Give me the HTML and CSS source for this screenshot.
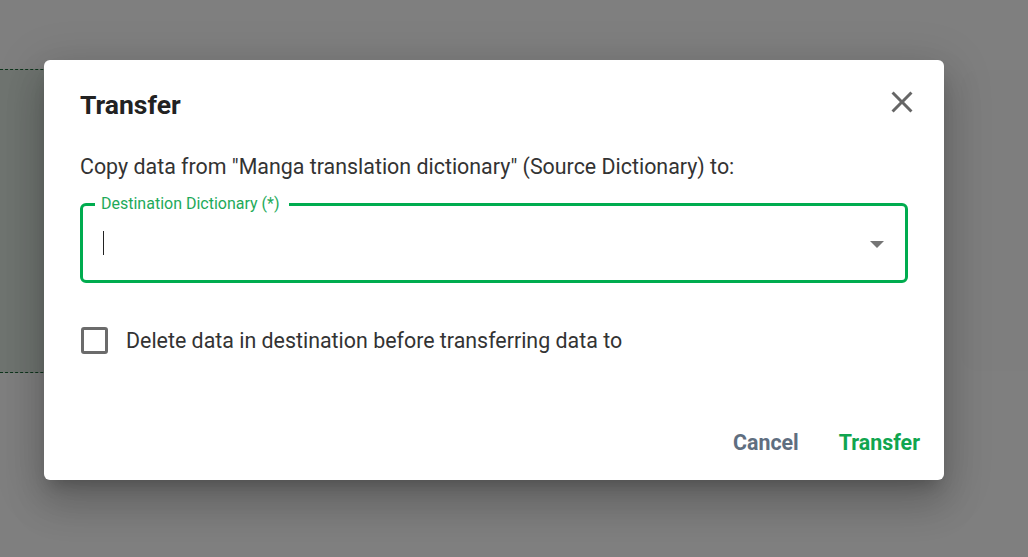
FILE: index.html
```html
<!DOCTYPE html>
<html>
<head>
<meta charset="utf-8">
<link rel="stylesheet" href="styles.css">
</head>
<body>
<div class="page">
  <div class="bg-card left"></div>
  <div class="bg-card right"></div>
</div>
<div class="overlay">
  <div class="dialog">
    <div class="head">
      <h2 class="title">Transfer</h2>
      <button class="close" aria-label="Close">
        <svg viewBox="0 0 24 24"><path d="M19 6.41 17.59 5 12 10.59 6.41 5 5 6.41 10.59 12 5 17.59 6.41 19 12 13.41 17.59 19 19 17.59 13.41 12z" fill="#666"/></svg>
      </button>
    </div>
    <p class="desc">Copy data from "Manga translation dictionary" (Source Dictionary) to:</p>
    <div class="field">
      <span class="legend">Destination Dictionary (*)</span>
      <span class="caret"></span>
      <span class="arrow"></span>
    </div>
    <label class="check">
      <span class="box"></span>
      <span class="check-text">Delete data in destination before transferring data to</span>
    </label>
    <div class="actions">
      <button class="btn cancel">Cancel</button>
      <button class="btn primary">Transfer</button>
    </div>
  </div>
</div>
</body>
</html>
```
FILE: styles.css
```css
html, body { margin: 0; padding: 0; }
body {
  width: 1028px; height: 557px; overflow: hidden;
  font-family: Roboto, "Liberation Sans", sans-serif;
  background: #fff;
  position: relative;
}
.page { height: 557px; display: flex; justify-content: space-between; align-items: flex-start; padding-top: 69px; box-sizing: border-box; }
.bg-card.left {
  width: 300px; height: 304px;
  background: #dfe9e1;
  border-top: 1px dashed #1f6b3a; border-bottom: 1px dashed #1f6b3a;
  box-sizing: border-box;
}
.bg-card.right {
  width: 67px; height: 301px; margin-top: 1px;
  background: #fdfdfd; border-radius: 16px 0 0 16px;
}
.overlay {
  position: absolute; inset: 0;
  background: rgba(0,0,0,0.5);
  padding: 60px 0 0 44px;
  box-sizing: border-box;
}
.dialog {
  width: 900px; height: 420px; box-sizing: border-box;
  background: #fff; border-radius: 6px;
  box-shadow: 0 11px 15px -7px rgba(0,0,0,.2), 0 24px 38px 3px rgba(0,0,0,.14), 0 9px 46px 8px rgba(0,0,0,.12);
  padding: 0 24px 0 36px;
  display: flex; flex-direction: column;
}
.head { display: flex; justify-content: space-between; align-items: center; height: 88px; }
.title { margin: 0; font-size: 26.5px; font-weight: 700; color: #222; }
.close { border: 0; background: none; padding: 0; width: 36px; height: 36px; display: flex; align-items: center; justify-content: center; margin-right: 0; margin-top: -4px; }
.close svg { width: 36px; height: 36px; display: block; }
.desc { margin: 0; font-size: 21.4px; color: #333; line-height: 28px; height: 38px; padding-top: 5px; }
.field {
  margin: 12px 12px 0 0; padding: 0 21px 0 20px; height: 80px; box-sizing: border-box;
  border: 3px solid #00ac4f; border-radius: 6px;
  display: flex; align-items: center; justify-content: space-between;
  position: relative;
}
.legend {
  position: absolute; left: 12px; top: -11px;
  font-size: 16px; line-height: 18px; color: #1eaa5a;
  background: #fff; padding: 0 9px 0 6px;
}
.caret { width: 1px; height: 24px; background: #222; }
.arrow { width: 0; height: 0; border-left: 7px solid transparent; border-right: 7px solid transparent; border-top: 7px solid #757575; margin-top: 2px; }
.check { display: flex; align-items: center; gap: 18px; margin-top: 44px; }
.box { width: 21px; height: 21px; border: 3px solid #6b6b6b; border-radius: 3px; margin-left: 1px; }
.check-text { font-size: 21.4px; color: #333; }
.actions { margin-top: auto; display: flex; justify-content: flex-end; gap: 40px; padding-bottom: 25px; }
.btn { border: 0; background: none; padding: 0; font-family: inherit; font-size: 21.4px; font-weight: 700; }
.cancel { color: #5f6e80; }
.primary { color: #10a54f; }
```
